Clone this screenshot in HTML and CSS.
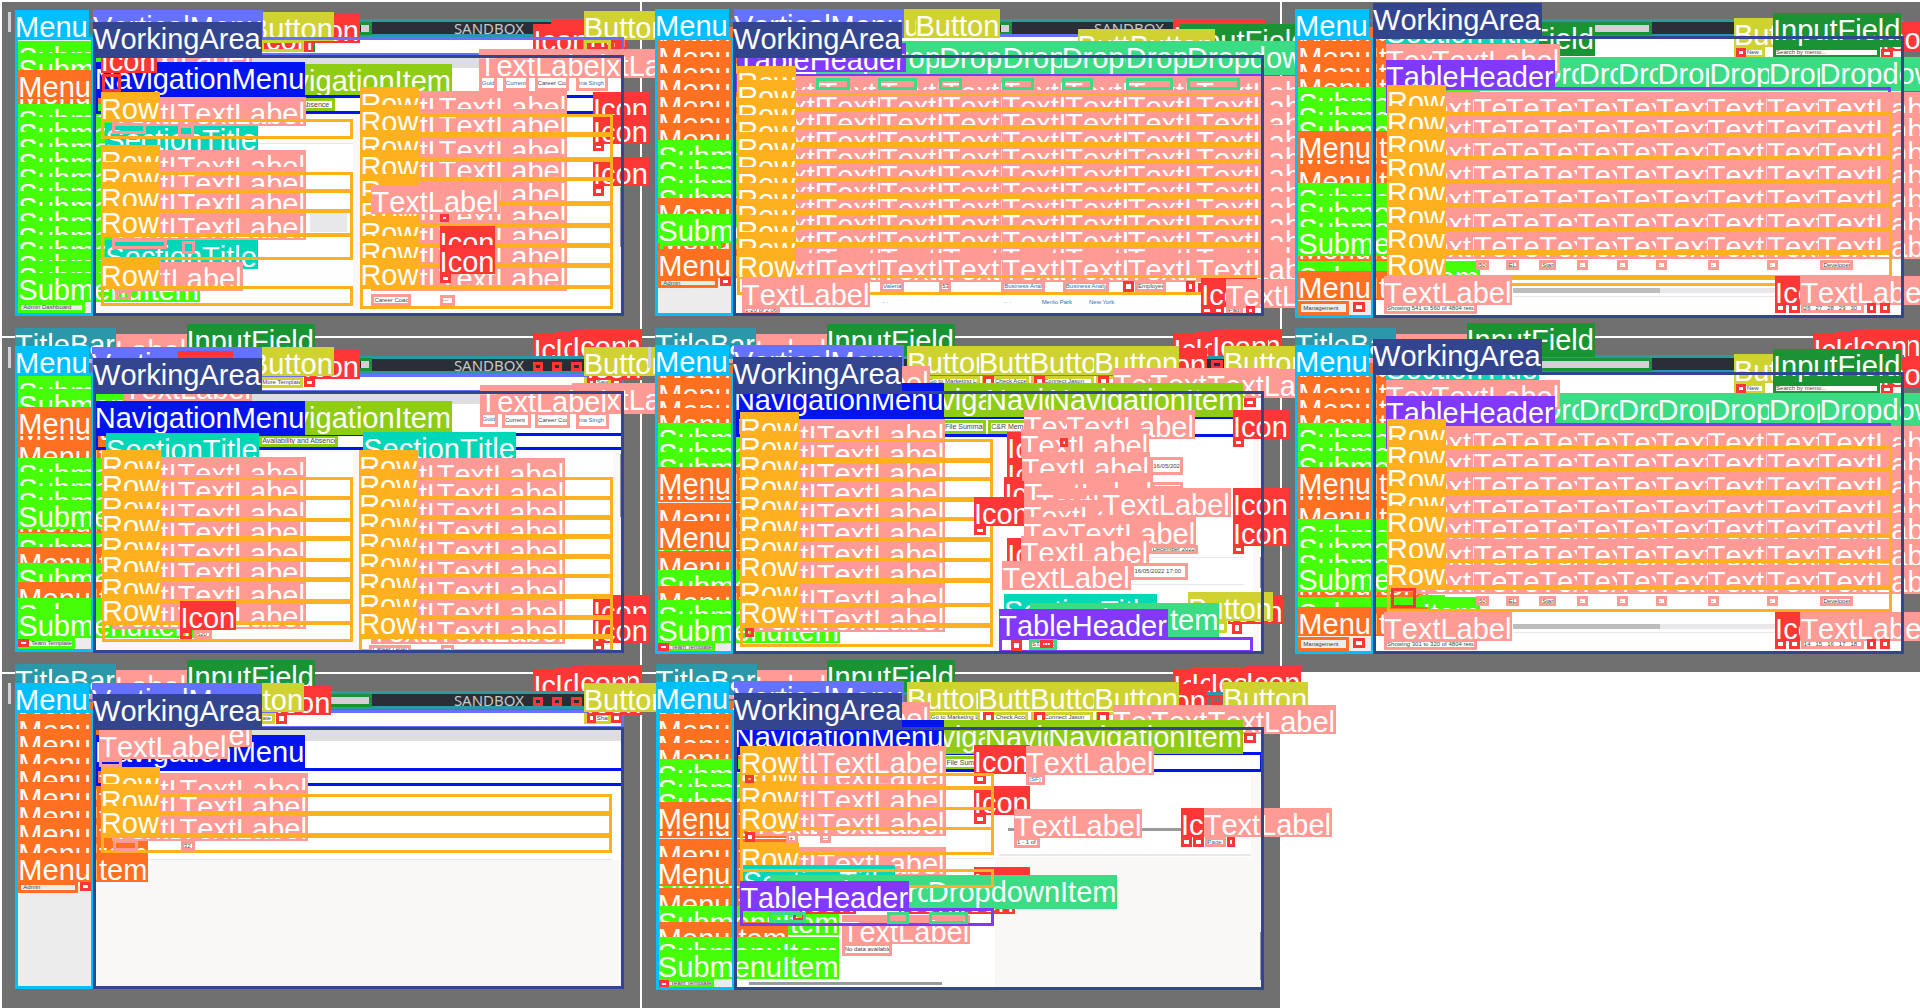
FILE: index.html
```
<!DOCTYPE html>
<html lang="en">
<head>
<meta charset="utf-8">
<title>Annotated screens</title>
<link rel="stylesheet" href="styles.css">
</head>
<body>
<main class="board" id="board"></main>
<script src="board.js"></script>
</body>
</html>
```
FILE: styles.css
```
* { box-sizing: border-box; }
body { margin: 0; background: #fff; font-family: "Liberation Sans", Arial, sans-serif; overflow-x: hidden; }
.board { display: grid; grid-template-columns: repeat(3, 1fr); grid-auto-rows: 336px; overflow: hidden; }
.panel { position: relative; margin: 0; }
.backdrop { position: absolute; inset: 2px 0 0 2px; background: #707070; }
.fill, .box, .tag { position: absolute; z-index: 1; }
.tag { height: 29px; padding: 0 1px 0 0; font-size: 29px; font-kerning: none; line-height: 34px; color: #fff; white-space: nowrap; background: var(--c); overflow: hidden; }
.tag.deep { height: 34px; }
.box { border: 3px solid var(--c); font-size: 6px; line-height: 7px; color: #444; white-space: nowrap; overflow: hidden; display: flex; align-items: center; justify-content: flex-start; }
.box.paper { background: #fff; }
.box.link { color: #2a6fb5; }
.box.SubmenuItem.paper, .box.MenuItem.paper { background: #ececec; padding-left: 2px; }
.box.NavigationItem.paper { font-size: 7px; line-height: 8px; }
.box.indent, .box.SubmenuItem.paper.indent { padding-left: 10px; }
.brand { font: 15px/15px "Noto Sans", sans-serif; color: #c8c8c8; }
.white { background: #fff; }
.side { background: #ececec; }
.dark { background: #2a2e36; }
.field { background: #d2d0d2; }
.head { background: #dedede; }
.body { background: #f9f8f7; }
.rule { background: #e8e8ea; }
.bar { background: #9a9a9a; }
.soft { background: #bdbdbd; }
.note { font-size: 6px; line-height: 7px; color: #2a6fb5; white-space: nowrap; }
.TitleBar { --c: #2a98a8; }
.TextLabel { --c: #ff9b94; }
.InputField { --c: #1a9432; }
.Icon { --c: #ff3636; }
.Button { --c: #d0d232; }
.VerticalMenu { --c: #6472ff; }
.WorkingArea { --c: #34458f; }
.Menu { --c: #00bfff; }
.MenuItem { --c: #ff7020; }
.SubmenuItem { --c: #44ff08; }
.NavigationMenu { --c: #0014f0; }
.NavigationItem { --c: #8fcc14; }
.SectionTitle { --c: #00d6b8; }
.DropdownItem { --c: #3cdc84; }
.TableHeader { --c: #8138ff; }
.Row { --c: #ffb01e; }
```
FILE: board.js
```
const NAMES = {
  b: 'TitleBar', T: 'TextLabel', F: 'InputField', I: 'Icon', B: 'Button', V: 'VerticalMenu',
  W: 'WorkingArea', M: 'Menu', m: 'MenuItem', s: 'SubmenuItem', N: 'NavigationMenu',
  n: 'NavigationItem', S: 'SectionTitle', D: 'DropdownItem', H: 'TableHeader', R: 'Row'
};
const board = document.getElementById('board');
let panel, unitsX, shift;

// Horizontal units are fractions of the panel, vertical ones are thirds of a pixel.
function place(el, x, y, x2, y2) {
  el.style.left = (x / unitsX * 100) + '%';
  el.style.top = Math.round(y / 3 - shift) + 'px';
  if (x2 !== undefined) {
    el.style.width = ((x2 - x) / unitsX * 100) + '%';
    el.style.height = Math.round((y2 - y) / 3) + 'px';
  }
  panel.append(el);
}
function make(cls, text) {
  const el = document.createElement('div');
  el.className = cls;
  if (text) el.textContent = text;
  return el;
}
function start(row, units) {
  panel = document.createElement('section');
  panel.className = 'panel';
  unitsX = units || 1568;
  shift = row * 6;
  panel.append(make('backdrop'));
  board.append(panel);
}
// "I 745,43 632,70" puts tags of one kind at each point, in drawing order.
function tags(text) {
  text.trim().split(/\s+/).reduce((kind, part) => {
    if (part.length === 1) return part;
    const [x, y] = part.split(',').map(Number);
    const name = NAMES[kind];
    place(make('tag ' + name + (/[gp]/.test(name) ? ' deep' : ''), name), x, y);
    return kind;
  }, '');
}
function boxes(list) {
  for (const [k, x, y, x2, y2, text, extra] of list)
    place(make('box ' + NAMES[k] + (text !== undefined ? ' paper ' : ' ') + (extra || ''), text), x, y, x2, y2);
}
function fills(list) {
  for (const [k, x, y, x2, y2, text] of list) place(make('fill ' + k, text), x, y, x2, y2);
}
function stack(kind, x, tops) { tags(kind + ' ' + tops.map(y => x + ',' + y).join(' ')); }
function rows(x, x2, spans, cols, lift, skip) {
  spans.forEach(([y], i) => {
    if (skip && skip.includes(i)) return;
    cols.forEach(c => tags('T ' + c + ',' + (y - lift)));
  });
  spans.forEach(([y, y2]) => { boxes([['R', x, y, x2, y2]]); tags('R ' + x + ',' + (y - 81)); });
}
function chain(tops, end) { return tops.map((y, i) => [y, i + 1 < tops.length ? tops[i + 1] + 14 : end]); }
function frame(top, bottom, bar) {
  fills([['side', 40, top, 228, bottom], ['white', 230, top, 1528, bottom],
    ['dark', 230, bar, 1430, bar + 42], ['brand', 1112, bar - 2, 1300, bar + 40, 'SANDBOX']]);
  boxes([['b', 37, bar - 8, 1530, bar + 47]]);
}
function close(menuY, workY, workTop, bottom, menuTop) {
  boxes([['M', 37, menuTop, 230, bottom], ['W', 228, workTop, 1530, bottom]]);
  tags('W 228,' + workY + ' M 37,' + menuY);
}
function headTags(y) { tags(`T 144,${y + 12} b 37,${y - 5} F 457,${y - 18} I 1307,${y + 10} 1360,${y + 5} 1435,${y - 3} 1402,${y}`); }

// Worker profile, lower section
start(0);
frame(112, 945, 65);
fills([['field', 885, 72, 905, 100], ['head', 235, 172, 1525, 205], ['field', 20, 35, 27, 95],
  ['body', 235, 342, 1525, 945], ['white', 247, 360, 866, 930], ['white', 883, 350, 1500, 930],
  ['rule', 247, 428, 866, 431], ['rule', 760, 640, 850, 697], ['bar', 1520, 560, 1526, 740]]);
boxes([['F', 457, 65, 912, 105]]);
tags('F 457,55 I 632,70 745,43 B 610,37 I 1400,60 1350,60 1307,72 B 1430,33 V 228,30');
boxes([['V', 228, 112, 1530, 170], ['B', 640, 120, 745, 157], ['B', 1430, 120, 1498, 157], ['I', 1498, 120, 1525, 157]]);
boxes([['T', 1173, 225, 1217, 272, 'Guid', 'link'], ['T', 1232, 225, 1297, 272, 'Current', 'link'],
  ['T', 1310, 225, 1395, 272, 'Career Coach'], ['T', 1410, 225, 1490, 272, 'Ina Singh', 'link']]);
tags('T 1240,147 1310,147 1402,147 1173,147');
stack('s', 45, [122, 160]);
stack('m', 45, [230, 210]);
stack('s', 45, [312, 352, 395, 440, 485, 530, 573, 618, 662, 705, 747, 782, 818]);
boxes([['s', 45, 905, 208, 938, 'Admin Dashboard'], ['n', 700, 293, 822, 332, 'and Absence']]);
tags('T 303,123 n 631,192');
boxes([['N', 232, 286, 1528, 342]]);
tags('N 232,187 I 247,133 S 258,370 258,720');
boxes([['I', 250, 222, 297, 275]]);
tags('I 1453,275 1453,345 1453,472');
rows(247, 866, [[357, 418], [517, 580], [567, 640], [627, 712], [699, 780]], [275, 435], 66);
rows(247, 866, [[857, 917]], [280], 70);
boxes([['T', 275, 370, 357, 403], ['T', 437, 375, 475, 412], ['T', 275, 718, 410, 748], ['T', 445, 722, 478, 760], ['T', 285, 870, 322, 900]]);
rows(883, 1502, chain([342, 397, 472, 530, 603, 670, 730, 790, 855], 928), [910, 1075], 69);
tags('T 910,555 I 1077,678 1077,735');
boxes([['I', 1077, 642, 1100, 665, ''], ['I', 1077, 822, 1105, 848, ''], ['I', 1453, 430, 1480, 455, ''],
  ['I', 1453, 557, 1480, 587, ''], ['T', 910, 882, 1008, 917, 'Career Coach'], ['T', 1077, 884, 1115, 917, '---']]);
close(30, 66, 165, 948, 110);

// Worker list
start(0);
frame(112, 945, 65);
fills([['field', 885, 72, 905, 98]]);
boxes([['F', 457, 65, 912, 105], ['V', 230, 103, 1528, 175]]);
tags('I 1307,60 1352,60 1398,60 F 1323,72 B 1072,88 1200,88 600,27 675,27 V 230,28');
tags('D 430,123 583,123 733,123 888,123 1033,123 1190,123 1340,123');
stack('m', 45, [82, 123, 172, 218, 270, 322, 370]);
stack('s', 45, [420, 465, 507, 550]);
stack('m', 45, [595, 668]);
stack('s', 45, [642]);
boxes([['s', 48, 730, 198, 764]]);
stack('m', 45, [748]);
boxes([['m', 45, 833, 190, 864, 'Admin'], ['I', 195, 830, 222, 858, '']]);
boxes([['H', 232, 222, 1528, 277]]);
tags('H 238,130');
rows(238, 1528, chain([280, 322, 374, 427, 478, 530, 581, 630, 677, 727, 778, 824], 885), [290, 440, 588, 742, 888, 1042, 1195, 1363], 53, [11]);
boxes([['D', 430, 235, 515, 272], ['D', 583, 235, 678, 272], ['D', 733, 235, 790, 272], ['D', 888, 235, 965, 272],
  ['D', 1033, 235, 1110, 272], ['D', 1190, 235, 1307, 272], ['D', 1340, 235, 1470, 272]]);
tags('T 290,758 440,758 588,758 742,758 888,758 1042,758 1195,758 1363,758');
boxes([['R', 238, 824, 1528, 885]]);
tags('R 238,750');
fills([['white', 648, 845, 1368, 876], ['white', 378, 886, 1375, 942]]);
boxes([['T', 588, 842, 648, 876, 'Valeria', 'link'], ['T', 733, 842, 762, 876, '53'], ['T', 885, 842, 993, 876, 'Business Analyst', 'link'],
  ['T', 1036, 842, 1148, 876, 'Business Analyst', 'link'], ['I', 1183, 842, 1210, 876, ''], ['T', 1213, 842, 1288, 876, 'Employee'],
  ['I', 1337, 842, 1360, 876, ''], ['I', 1368, 850, 1390, 876, '']]);
fills([['note', 984, 898, 1060, 922, 'Menlo Park'], ['note', 1100, 898, 1170, 922, 'New York'],
  ['note', 594, 898, 640, 922, '-   ·'], ['note', 890, 898, 970, 922, '··    ·']]);
tags('T 250,835 I 1375,835 T 1435,838');
boxes([['T', 250, 918, 343, 944, '1-20 of 2,064'], ['I', 1375, 918, 1403, 944, ''], ['I', 1405, 918, 1432, 944, ''],
  ['T', 1435, 918, 1478, 944, 'Page 1'], ['I', 1485, 918, 1508, 944, '']]);
close(27, 66, 165, 948, 110);

// Project table, shared by two screens
function projectTable(row, dy, lastIsOpen) {
  start(row);
  const d = dy;
  if (row) headTags(0);
  frame(112 + d, 950 + d, 65 + d);
  fills([['field', 640, 72 + d, 905, 98 + d]]);
  boxes([['F', 457, 65 + d, 912, 105 + d]]);
  fills([['white', 232, 110 + d, 1528, 180 + d]]);
  stack('m', 45, [82, 122, 170, 215].map(y => y + d));
  stack('s', 45, [262, 303, 345].map(y => y + d));
  stack('m', 45, [412, 392, 495].map(y => y + d));
  stack('s', 45, [550, 588, 635].map(y => y + d));
  stack('m', 45, [695 + d]);
  stack('s', 45, [782 + d, 680 + d]);
  stack('m', 45, [812 + d]);
  boxes([['m', 45, 902 + d, 170, 943 + d, 'Management'], ['I', 180, 905 + d, 208, 935 + d, '']]);
  tags(`${row ? 'F 457,-22' : 'F 457,65'} S 260,${48 + d} I 1475,${65 + d} B 1112,${53 + d} F 1208,${40 + d}`);
  boxes([['B', 1112, 142 + d, 1188, 175 + d, 'New', 'indent'], ['I', 1118, 145 + d, 1142, 172 + d, ''],
    ['F', 1208, 140 + d, 1470, 174 + d, 'Search by memo...'], ['I', 1473, 146 + d, 1502, 172 + d, '']]);
  tags([473, 553, 638, 732, 828, 925, 1052, 1198, 1322].reduce((s, x) => s + ` ${x},${171 + d}`, 'D'));
  tags(`T 260,${132 + d} 372,${132 + d}`);
  boxes([['H', 260, 262 + d, 1497, 340 + d]]);
  tags(`H 260,${180 + d}`);
  const tops = lastIsOpen ? [348, 411, 480, 548, 610, 686, 765] : [337, 400, 468, 538, 608, 680, 749, 826];
  rows(262, 1500, chain(tops, lastIsOpen ? 845 : 858), [330, 475, 553, 635, 728, 825, 922, 1048, 1194, 1320], 60, [7]);
  const y = 781 + d, z = 812 + d;
  boxes([['T', 480, y, 513, z, '50'], ['T', 553, y, 585, z, 'EL'], ['T', 635, y, 677, z, 'Start'], ['T', 728, y, 754, z, '-'],
    ['T', 826, y, 852, z, '-'], ['T', 921, y, 947, z, '-'], ['T', 1049, y, 1076, z, '-'], ['T', 1193, y, 1219, z, '-'],
    ['T', 1324, y, 1405, z, 'Developer']]);
  if (lastIsOpen) boxes([['I', 272, 775, 332, 834], ['s', 340, 795, 405, 818]]);
  fills([['rule', 571, 863 + d, 1212, 878 + d], ['soft', 571, 863 + d, 930, 878 + d], ['rule', 571, 888 + d, 1212, 891 + d]]);
  tags(`T 255,${827 + d} I 1213,${827 + d} T 1275,${827 + d}`);
  boxes([['T', 255, 910 + d, 482, 942 + d, row ? 'Showing 301 to 320 of 4804 results' : 'Showing 541 to 560 of 4804 results'], ['I', 1213, 910 + d, 1240, 940 + d, ''],
    ['I', 1247, 910 + d, 1273, 940 + d, ''], ['T', 1276, 910 + d, 1432, 940 + d, row ? '14 \u00a0 15 \u00a0 16 \u00a0 17 \u00a0 18' : '26 \u00a0 27 \u00a0 28 \u00a0 29 \u00a0 30'],
    ['I', 1438, 910 + d, 1461, 940 + d, ''], ['I', 1470, 910 + d, 1495, 940 + d, '']]);
  close(27 + d, 10 + d, 107 + d, 952 + d, 110 + d);
}
projectTable(0, 0, false);

// Worker profile, upper section
start(1);
headTags(0);
frame(130, 965, 85);
fills([['field', 885, 92, 905, 118], ['head', 235, 190, 1525, 222], ['body', 235, 362, 1525, 965],
  ['white', 250, 368, 866, 935], ['white', 880, 368, 1502, 965], ['bar', 1520, 372, 1526, 562], ['field', 20, 50, 27, 112]]);
boxes([['F', 457, 85, 912, 125], ['I', 1307, 95, 1330, 122], ['I', 1353, 95, 1378, 122], ['I', 1400, 95, 1425, 122], ['V', 228, 132, 1530, 188],
  ['B', 635, 142, 742, 174, 'More Templates'], ['I', 745, 145, 772, 173, ''], ['B', 1430, 142, 1498, 174, 'Save', 'indent'],
  ['I', 1437, 145, 1460, 173, ''], ['I', 1498, 145, 1523, 173, '']]);
tags('I 745,60 B 610,50 I 1437,62 B 1430,50 V 225,50 I 435,62');
boxes([['T', 1175, 245, 1220, 290, 'Guid', 'link'], ['T', 1230, 245, 1301, 292, 'Current'],
  ['T', 1311, 245, 1396, 292, 'Career Coach'], ['T', 1410, 245, 1493, 296, 'Ina Singh', 'link']]);
tags('T 1240,165 1325,165 1402,160 1175,165');
stack('s', 45, [137, 178]);
stack('m', 45, [248, 230, 330]);
stack('s', 45, [385, 425, 467]);
stack('m', 45, [525]);
stack('s', 45, [610, 510]);
stack('m', 45, [650]);
stack('s', 45, [700]);
stack('m', 45, [755]);
stack('s', 45, [803, 838]);
boxes([['s', 45, 925, 183, 958, 'Team Templates', 'indent'], ['I', 45, 928, 70, 952, ''], ['n', 635, 316, 827, 352, 'Availability and Absences'], ['N', 232, 310, 1528, 362]]);
tags('T 303,125 n 631,213 N 232,212 S 260,308 890,305 I 1453,795 1453,852');
rows(250, 866, chain([442, 498, 563, 619, 683, 741, 808, 872], 935), [275, 435], 62);
rows(880, 1502, chain([442, 498, 555, 612, 672, 731, 791, 855, 912], 966), [908, 1070], 57);
tags('I 442,813');
boxes([['I', 442, 900, 470, 926], ['T', 475, 901, 519, 928, '520'], ['T', 905, 945, 1007, 968, 'Career Level'], ['T', 1080, 945, 1113, 968, '---'], ['I', 1453, 940, 1480, 968, '']]);
close(48, 85, 183, 968, 130);

// Contact, summary tab
start(1);
headTags(0);
frame(130, 965, 85);
fills([['body', 866, 320, 1525, 965], ['white', 880, 325, 1502, 965], ['rule', 1250, 680, 1480, 684], ['rule', 1200, 762, 1480, 766],
  ['bar', 1520, 680, 1526, 772], ['field', 20, 50, 27, 112]]);
boxes([['I', 1400, 90, 1428, 118], ['V', 230, 128, 1530, 190], ['B', 700, 138, 832, 167, 'Go to Marketing List'], ['B', 838, 138, 952, 167, 'Check Access', 'indent'],
  ['B', 958, 138, 1112, 167, 'Connect Jason', 'indent'], ['B', 1118, 138, 1200, 167, ''], ['I', 840, 138, 868, 167, ''], ['I', 965, 138, 992, 167, ''], ['I', 1122, 138, 1148, 167, '']]);
tags('I 1253,55 B 655,48 830,48 955,48 1113,48 1430,48 V 230,45 T 395,108 1160,115 1250,115 1390,117');
boxes([['n', 740, 270, 848, 312, 'File Summary'], ['n', 853, 270, 1010, 312, 'C&R Memos']]);
stack('m', 45, [105, 145, 193, 235]);
stack('s', 45, [280, 322, 365]);
stack('m', 45, [430, 410, 520]);
stack('s', 45, [592]);
stack('m', 45, [662, 573]);
stack('s', 45, [720]);
stack('m', 45, [768]);
stack('s', 45, [810, 852]);
boxes([['s', 45, 938, 183, 965, 'Team Templates', 'indent'], ['I', 45, 940, 70, 963, ''], ['N', 235, 258, 1528, 320]]);
tags('n 645,160 848,160 1002,160 N 230,160');
boxes([['I', 1480, 203, 1508, 230, '']]);
rows(245, 864, chain([328, 385, 440, 502, 560, 622, 683, 745, 818, 880], 952), [275, 433], 60);
tags('I 900,305 900,385 893,440 818,502 900,625 1453,240 1453,475 1453,562');
tags('T 940,240 1045,240 933,297 935,365 942,430 942,440 970,475 940,510 1133,475 940,560 1048,560 933,618 888,693');
boxes([['I', 258, 895, 280, 922], ['T', 1250, 382, 1330, 435, '16/05/2021'], ['T', 1255, 455, 1330, 475],
  ['T', 1204, 700, 1343, 752, '16/05/2022 17:00'], ['T', 1248, 645, 1367, 672, 'December 2022']]);
boxes([['I', 1030, 325, 1048, 353], ['I', 818, 588, 847, 615, ''], ['I', 1453, 325, 1480, 353, ''], ['I', 1453, 645, 1480, 672, ''],
  ['B', 1300, 873, 1437, 910, 'Refresh'], ['I', 1450, 875, 1474, 910, '']]);
tags('I 1440,795 B 1343,787 S 892,793 D 955,820 H 880,837');
boxes([['H', 880, 920, 1502, 968, ''], ['I', 908, 930, 937, 962, ''], ['D', 953, 926, 1022, 960, 'STATUS'], ['I', 980, 930, 1012, 955]]);
close(45, 82, 182, 970, 128);

projectTable(1, 18, true);

// Settings
start(2);
headTags(18);
frame(150, 985, 102);
fills([['field', 812, 112, 905, 136], ['head', 235, 210, 1525, 242], ['body', 235, 600, 1525, 980], ['rule', 247, 597, 1500, 600], ['field', 20, 68, 27, 130]]);
boxes([['F', 457, 103, 912, 142], ['I', 1307, 112, 1330, 140], ['I', 1353, 112, 1378, 140], ['I', 1400, 112, 1425, 140], ['V', 228, 150, 1530, 206],
  ['B', 636, 158, 675, 192, 'ate'], ['I', 675, 160, 703, 192, ''], ['B', 1430, 158, 1498, 192, 'Share', 'indent'], ['I', 1437, 160, 1460, 190, ''], ['I', 1498, 160, 1523, 190, '']]);
tags('I 675,78 B 537,70 I 1437,78 B 1430,70 V 225,68');
stack('m', 45, [125, 163, 207, 260, 313, 367, 420, 475, 530, 580]);
boxes([['m', 45, 665, 190, 698, 'Admin'], ['I', 195, 667, 223, 695, ''], ['N', 232, 325, 1528, 378]]);
tags('N 232,225 T 303,175 243,210');
boxes([['T', 243, 297, 300, 320]]);
rows(247, 1500, chain([403, 454, 520], 580), [275, 440], 65);
boxes([['T', 278, 540, 337, 572], ['T', 443, 543, 478, 574, '32']]);
close(68, 102, 202, 987, 150);

// Contact, end of the summary tab
start(2, 1434);
fills([['side', 38, 150, 212, 985], ['white', 212, 150, 1396, 985], ['body', 795, 590, 1390, 980], ['body', 1370, 338, 1390, 590],
  ['rule', 805, 583, 1370, 588], ['rule', 225, 594, 793, 598], ['bar', 825, 505, 1212, 514], ['bar', 245, 967, 677, 976], ['bar', 1390, 815, 1395, 960]]);
tags('T 132,30 b 35,12 F 418,0 I 1195,28 1235,22 1278,20 1357,17');
boxes([['b', 35, 95, 1398, 148], ['I', 1280, 105, 1305, 135], ['V', 210, 145, 1398, 207], ['B', 645, 155, 762, 187, 'Go to Marketing List'], ['B', 768, 155, 870, 187, 'Check Access', 'indent'],
  ['B', 877, 155, 1016, 187, 'Connect Jason', 'indent'], ['B', 1022, 155, 1080, 187, ''], ['I', 768, 155, 794, 187, ''], ['I', 883, 155, 908, 187, ''], ['I', 1025, 155, 1050, 187, '']]);
tags('I 1145,72 B 598,67 758,67 874,67 1018,67 1307,67 V 210,62 T 362,125 1060,135 1145,135 1272,135');
boxes([['n', 680, 288, 775, 330, 'File Summary']]);
stack('m', 40, [122, 162, 207, 250]);
stack('s', 40, [298, 340, 382]);
stack('m', 40, [447, 427, 537]);
stack('s', 40, [612]);
stack('m', 40, [685, 592]);
stack('s', 40, [738]);
stack('m', 40, [787]);
stack('s', 40, [832, 870]);
boxes([['s', 40, 957, 165, 985, 'Team Templates', 'indent'], ['I', 43, 960, 64, 983, ''], ['N', 213, 277, 1396, 338]]);
tags('n 590,180 773,180 915,180 N 210,180');
boxes([['I', 1353, 220, 1380, 249, ''], ['I', 748, 342, 775, 371, ''], ['I', 748, 462, 775, 491, ''], ['T', 865, 343, 907, 375, '(SF)', 'link'], ['T', 838, 532, 896, 564, '1 - 1 of 1'],
  ['I', 1212, 530, 1236, 561, ''], ['I', 1240, 530, 1263, 561, ''], ['T', 1265, 530, 1312, 561, 'Page 1', 'link'], ['I', 1315, 530, 1333, 561, '']]);
tags('I 748,255 748,378 T 865,258 838,447 I 1212,445 T 1263,445');
tags('I 748,622 T 252,297 397,297 252,257 397,257 252,372 397,372 252,440 397,440 252,560 397,560');
boxes([['R', 225, 378, 793, 450], ['R', 225, 338, 793, 388], ['R', 225, 440, 793, 510], ['R', 225, 500, 793, 584]]);
tags('R 225,297 225,257 225,363 225,425 225,547 S 230,615');
boxes([['I', 235, 515, 257, 545, ''], ['I', 235, 345, 256, 370], ['T', 328, 520, 353, 550, '+'], ['T', 403, 520, 428, 550, '---']]);
tags('I 358,675 580,675 715,675 D 292,645 552,645 645,645');
boxes([['R', 225, 628, 793, 684]]);
tags('H 225,662');
tags('T 452,765');
boxes([['H', 225, 745, 793, 798], ['I', 343, 757, 369, 784], ['D', 290, 757, 373, 790], ['D', 553, 755, 603, 790], ['D', 647, 755, 735, 790], ['T', 452, 850, 564, 888, 'No data available']]);
boxes([['M', 35, 150, 213, 990], ['W', 210, 200, 1398, 990]]);
tags('W 210,100 M 35,65');
```
